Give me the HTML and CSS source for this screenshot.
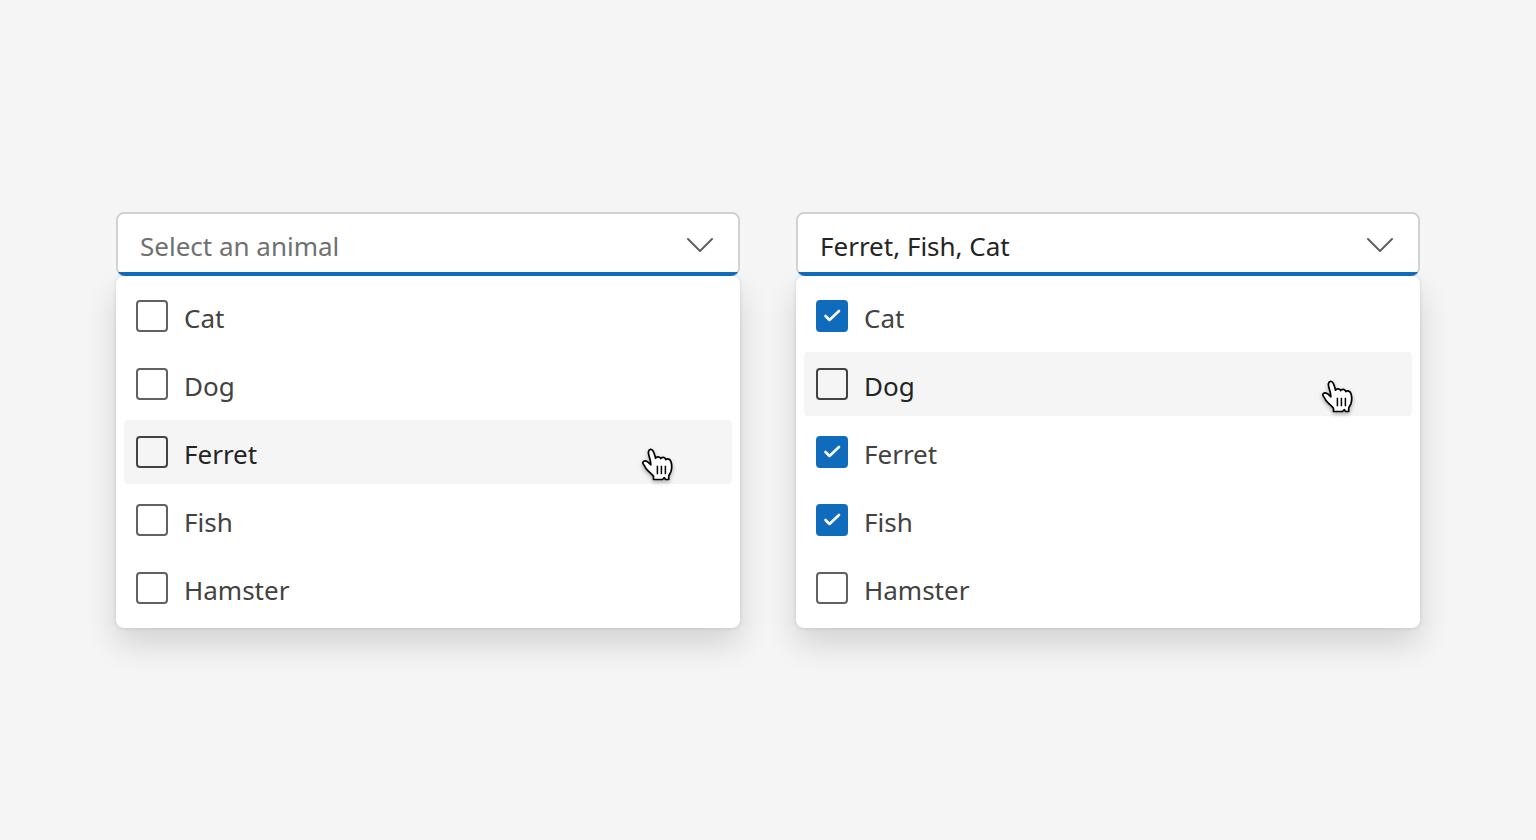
FILE: index.html
```html
<!DOCTYPE html>
<html lang="en">
<head>
    <meta charset="UTF-8">
    <meta name="viewport" content="width=device-width, initial-scale=1">
    <title>Multiselect dropdown</title>
    <link rel="stylesheet" href="styles.css">
</head>
<body>
<!-- shared shapes -->
<svg class="defs" aria-hidden="true">
    <symbol id="chevron" viewBox="0 0 26 14">
        <path d="M1 1L13 13L25 1" fill="none" stroke="#616161" stroke-width="2" stroke-linecap="round" stroke-linejoin="round"/>
    </symbol>
    <symbol id="check" viewBox="0 0 32 32">
        <path d="M9.5 16L13.5 20L23 11" fill="none" stroke="#fff" stroke-width="2.6" stroke-linecap="round" stroke-linejoin="round"/>
    </symbol>
    <symbol id="hand" viewBox="0 0 32 34">
        <path d="M11.5 31.5V28.5C10.5 26.5 6 23.5 4 20.5C2.8 18.5 2.4 17.6 1.4 16.3C.2 14.4 1.2 12.8 3 12.8C5.4 12.8 7.2 15 8.8 16.8C9 14 7.8 10.5 6.9 7.5C6.2 5 6 1.6 8.5 1.3C11.3 1 12 4.5 12.8 7.4L13.6 10.2C14.5 8.4 18 8.4 18.7 10.6C20 8.7 23.2 9.1 23.8 11.6C25.4 10.2 28.1 11.1 28.9 13.5C30 16.8 29.9 20.5 29 23.5C28.4 25.3 26.8 27 26.7 28.5L26.8 31.5H23.5L22.3 29.6L20.5 31.5Z" fill="#fff" stroke="#000" stroke-width="1.7" stroke-linejoin="round"/>
        <path d="M15.4 17.8V26.2M19.4 17.8V26.2M23.4 17.8V26.2" fill="none" stroke="#000" stroke-width="1.5"/>
    </symbol>
</svg>

<main class="page">
    <div class="dropdown">
        <button type="button" class="field" aria-expanded="true" aria-controls="list-1">
            <span class="placeholder">Select an animal</span>
            <svg class="chevron" aria-hidden="true"><use href="#chevron"/></svg>
        </button>
        <ul class="list" id="list-1">
            <li><label class="option"><span class="box"><input type="checkbox"><svg><use href="#check"/></svg></span>Cat</label></li>
            <li><label class="option"><span class="box"><input type="checkbox"><svg><use href="#check"/></svg></span>Dog</label></li>
            <li><label class="option active"><span class="box"><input type="checkbox"><svg><use href="#check"/></svg></span>Ferret<svg class="hand" aria-hidden="true"><use href="#hand"/></svg></label></li>
            <li><label class="option"><span class="box"><input type="checkbox"><svg><use href="#check"/></svg></span>Fish</label></li>
            <li><label class="option"><span class="box"><input type="checkbox"><svg><use href="#check"/></svg></span>Hamster</label></li>
        </ul>
    </div>

    <div class="dropdown">
        <button type="button" class="field" aria-expanded="true" aria-controls="list-2">
            <span>Ferret, Fish, Cat</span>
            <svg class="chevron" aria-hidden="true"><use href="#chevron"/></svg>
        </button>
        <ul class="list" id="list-2">
            <li><label class="option"><span class="box"><input type="checkbox" checked><svg><use href="#check"/></svg></span>Cat</label></li>
            <li><label class="option active"><span class="box"><input type="checkbox"><svg><use href="#check"/></svg></span>Dog<svg class="hand" aria-hidden="true"><use href="#hand"/></svg></label></li>
            <li><label class="option"><span class="box"><input type="checkbox" checked><svg><use href="#check"/></svg></span>Ferret</label></li>
            <li><label class="option"><span class="box"><input type="checkbox" checked><svg><use href="#check"/></svg></span>Fish</label></li>
            <li><label class="option"><span class="box"><input type="checkbox"><svg><use href="#check"/></svg></span>Hamster</label></li>
        </ul>
    </div>
</main>
</body>
</html>
```
FILE: styles.css
```css
*{box-sizing:border-box;}
body,ul{margin:0;padding:0;}
ul{list-style:none;}
body{background:#f5f5f5;color:#242424;font:26px/36px "Segoe UI","Noto Sans","Open Sans",sans-serif;}
.defs{position:absolute;width:0;height:0;}

.page{display:flex;align-items:center;gap:56px;min-height:100vh;padding:0 116px;}
.dropdown{flex:1;min-width:0;}

/* closed part */
.field{position:relative;display:flex;align-items:center;justify-content:space-between;width:100%;height:64px;padding:4px 25px 0 22px;border:2px solid #d1d1d1;border-radius:8px;background:#fff;color:inherit;font:inherit;text-align:left;cursor:pointer;}
.field::after{content:"";position:absolute;left:-1px;right:-1px;bottom:-2px;height:8px;border-radius:0 0 8px 8px;background:#0f6cbd;clip-path:inset(4px 0 0 0);}
.placeholder{color:#707070;}
.chevron{width:26px;height:14px;margin-bottom:2px;}

/* popup */
.list{display:flex;flex-direction:column;gap:4px;padding:8px;border-radius:8px;background:#fff;box-shadow:0 0 4px rgba(0,0,0,.12),0 16px 32px rgba(0,0,0,.14);}
.option{position:relative;display:flex;align-items:center;gap:16px;height:64px;padding:4px 12px 0;border-radius:4px;color:#424242;cursor:pointer;}
.option.active{background:#f5f5f5;color:#242424;}

.box{display:grid;width:32px;height:32px;margin-bottom:4px;}
.box input,.box svg{grid-area:1/1;width:32px;height:32px;margin:0;}
.box input{appearance:none;border:2px solid #616161;border-radius:4px;background:transparent;cursor:pointer;}
.active .box input{border-color:#424242;}
.box input:checked{border-color:#0f6cbd;background:#0f6cbd;}
.box svg{visibility:hidden;pointer-events:none;}
.box input:checked + svg{visibility:visible;}

/* pointer over the hovered row */
.hand{position:absolute;top:28px;right:58px;width:32px;height:34px;filter:drop-shadow(0 2px 2px rgba(0,0,0,.3));pointer-events:none;}
```
